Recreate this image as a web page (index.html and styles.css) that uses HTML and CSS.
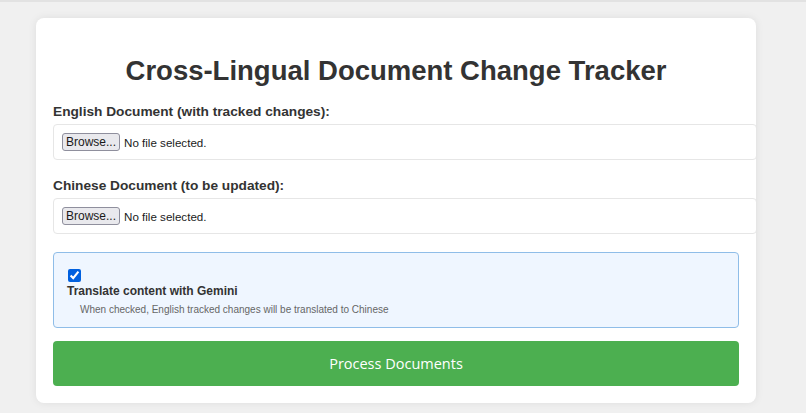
FILE: index.html
```html
<!DOCTYPE html>
<html lang="en">
<head>
<meta charset="utf-8">
<title>Cross-Lingual Document Change Tracker</title>
<link rel="stylesheet" href="styles.css">
</head>
<body>
<main class="card">
  <h1 class="title">Cross-Lingual Document Change Tracker</h1>
  <div class="field">
    <label class="field-label" for="en-doc">English Document (with tracked changes):</label>
    <div class="file-box">
      <button class="browse" id="en-doc" type="button">Browse...</button>
      <span class="file-status">No file selected.</span>
    </div>
  </div>
  <div class="field">
    <label class="field-label" for="zh-doc">Chinese Document (to be updated):</label>
    <div class="file-box">
      <button class="browse" id="zh-doc" type="button">Browse...</button>
      <span class="file-status">No file selected.</span>
    </div>
  </div>
  <div class="option">
    <input class="check" type="checkbox" id="translate" checked>
    <label class="option-label" for="translate">Translate content with Gemini</label>
    <p class="option-hint">When checked, English tracked changes will be translated to Chinese</p>
  </div>
  <button class="process" type="button">Process Documents</button>
</main>
</body>
</html>
```

FILE: styles.css
```css
html, body {
  margin: 0;
  padding: 0;
}
body {
  background: #f0f0f0;
  border-top: 2px solid #e2e2e2;
  font-family: "Liberation Sans", Arial, sans-serif;
  color: #333;
  padding: 16px 50px 10px 36px;
  min-height: 413px;
  box-sizing: border-box;
}
.card {
  width: 720px;
  box-sizing: border-box;
  background: #fff;
  border-radius: 8px;
  box-shadow: 0 0 8px rgba(0, 0, 0, 0.08);
  padding: 16px 17px 17px 17px;
}
.title {
  margin: 20px 0 15px;
  font-size: 27.5px;
  line-height: 34px;
  font-weight: bold;
  text-align: center;
  color: #333;
}
.field {
  margin-bottom: 17px;
}
.field-label {
  display: block;
  font-size: 13.7px;
  line-height: 17px;
  font-weight: bold;
  margin-bottom: 4px;
}
.file-box {
  width: 100%;
  height: 34px;
  border: 1px solid #e6e6e6;
  border-radius: 4px;
  padding: 0 8px;
  display: flex;
  align-items: center;
  gap: 4px;
}
.browse {
  font-family: "Liberation Sans", Arial, sans-serif;
  font-size: 12px;
  color: #1a1a1a;
  background: #e9e9ed;
  border: 1px solid #8f8f9d;
  border-radius: 3px;
  height: 18px;
  padding: 0 3px;
  margin: 0;
}
.file-status {
  font-size: 11.6px;
  color: #1a1a1a;
}
.option {
  margin-top: 18px;
  background: #eff6ff;
  border: 1px solid #8fbde8;
  border-radius: 4px;
  padding: 14px 13px 11px;
}
.check {
  display: block;
  width: 13px;
  height: 13px;
  margin: 2px 0 2px 1px;
  accent-color: #0060df;
}
.option-label {
  display: block;
  font-size: 12px;
  line-height: 15px;
  font-weight: bold;
  color: #333;
}
.option-hint {
  margin: 4px 0 0 13px;
  font-size: 10px;
  line-height: 13px;
  color: #666;
}
.process {
  display: block;
  width: 100%;
  margin-top: 13px;
  height: 45px;
  background: #4caf50;
  color: #fff;
  border: none;
  border-radius: 4px;
  font-family: "Open Sans", sans-serif;
  font-size: 14.5px;
}
```
